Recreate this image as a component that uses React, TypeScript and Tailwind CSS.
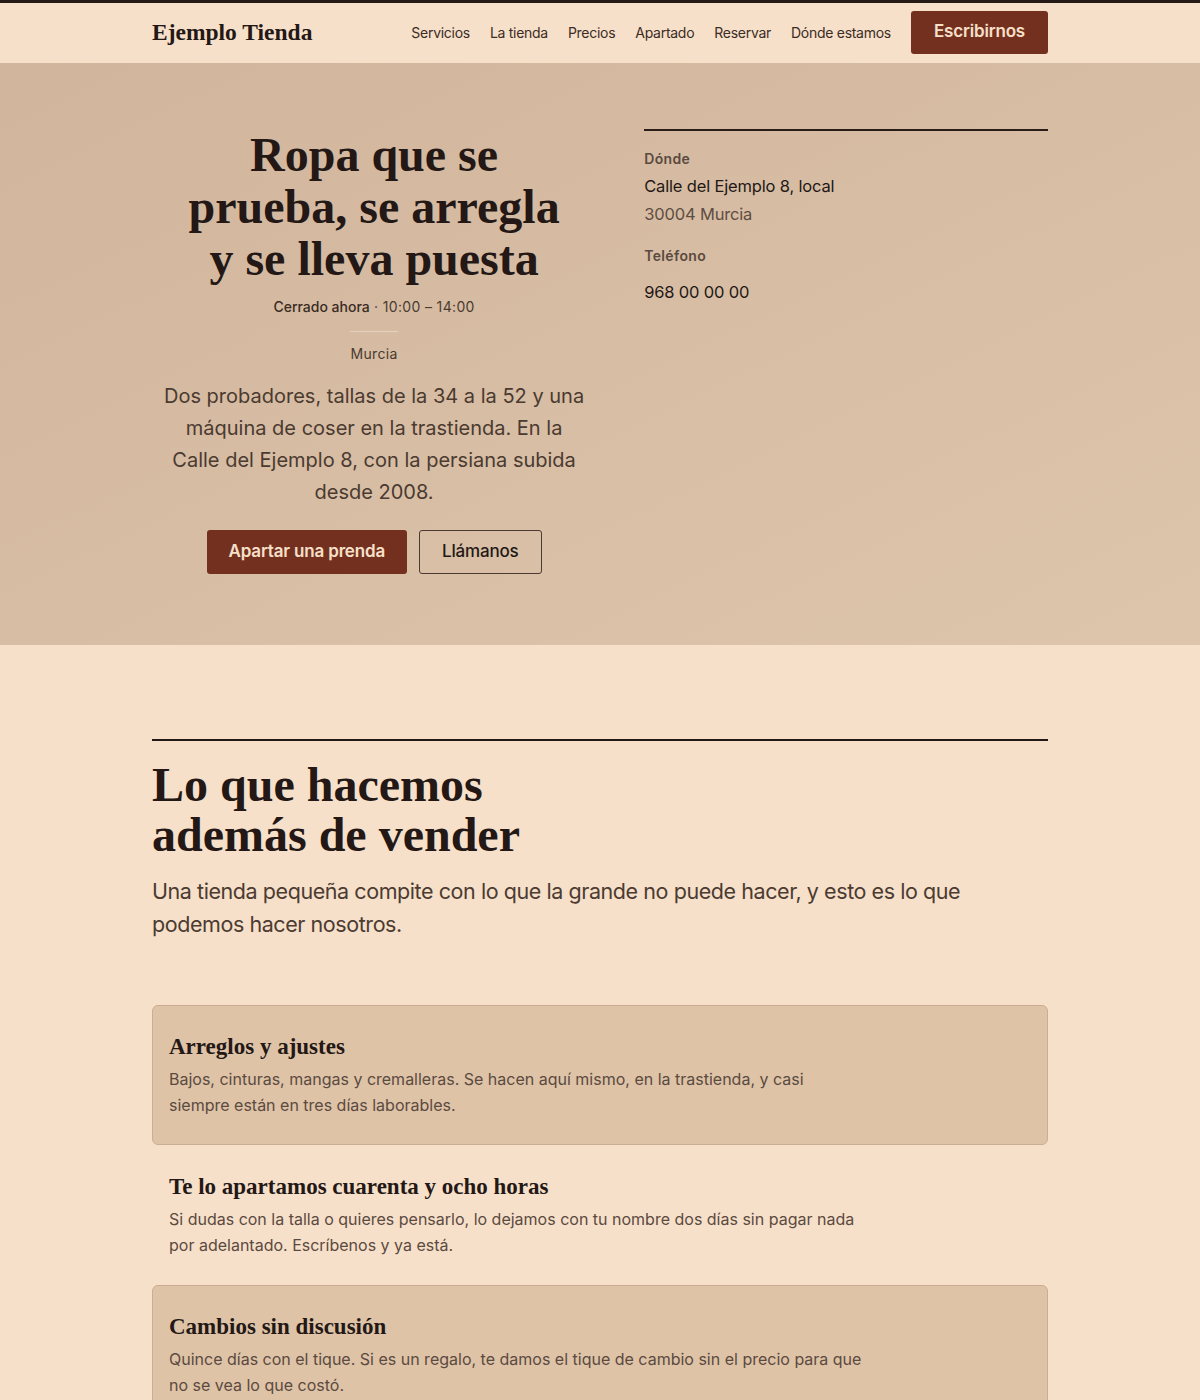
const serif = "font-['Liberation_Serif',serif]";

const NAV = ["Servicios", "La tienda", "Precios", "Apartado", "Reservar", "Dónde estamos"];

const SERVICES = [
  {
    title: "Arreglos y ajustes",
    text: "Bajos, cinturas, mangas y cremalleras. Se hacen aquí mismo, en la trastienda, y casi siempre están en tres días laborables.",
    filled: true,
  },
  {
    title: "Te lo apartamos cuarenta y ocho horas",
    text: "Si dudas con la talla o quieres pensarlo, lo dejamos con tu nombre dos días sin pagar nada por adelantado. Escríbenos y ya está.",
    filled: false,
  },
  {
    title: "Cambios sin discusión",
    text: "Quince días con el tique. Si es un regalo, te damos el tique de cambio sin el precio para que no se vea lo que costó.",
    filled: true,
  },
];

function Header() {
  return (
    <header className="border-t-[3px] border-[#231a16] bg-[#f7e0ca]">
      <div className="mx-auto flex h-[60px] max-w-4xl items-center justify-between">
        <a className={`${serif} text-[23.5px] font-bold text-[#231815]`}>Ejemplo Tienda</a>
        <nav className="flex items-center gap-5">
          {NAV.map((item) => (
            <a key={item} className="text-sm tracking-[-0.02em] text-[#3b2c24]">
              {item}
            </a>
          ))}
          <a className="-mt-0.5 flex h-[43px] items-center rounded-[3px] bg-[#74301f] px-[23px] text-[17px] font-semibold tracking-[-0.01em] text-[#f7e0ca]">
            Escribirnos
          </a>
        </nav>
      </div>
    </header>
  );
}

function Hero() {
  return (
    <section className="bg-linear-to-br from-[#d1b59c] to-[#ddc5ab] pt-[66px] pb-[71px]">
      <div className="mx-auto grid max-w-4xl grid-cols-[1.1fr_1fr] gap-12">
        <div className="flex flex-col items-center text-center">
          <h1 className={`${serif} text-[48px] leading-[52px] font-bold text-[#231815]`}>
            Ropa que se
            <br />
            prueba, se arregla
            <br />y se lleva puesta
          </h1>
          <p className="mt-3 text-sm leading-5 text-[#4a3a30]">
            <span className="font-medium text-[#3a2b23]">Cerrado ahora</span>
            <span className="tracking-wide"> · 10:00 – 14:00</span>
          </p>
          <div className="mt-3.5 h-px w-12 bg-[#e4d0bc]" />
          <p className="mt-3 text-sm leading-5 tracking-wide text-[#4a3a30]">Murcia</p>
          <p className="mt-4 text-[20px] leading-8 text-[#4a3a30]">
            Dos probadores, tallas de la 34 a la 52 y una
            <br />
            máquina de coser en la trastienda. En la
            <br />
            Calle del Ejemplo 8, con la persiana subida
            <br />
            desde 2008.
          </p>
          <div className="mt-[22px] flex gap-3">
            <a className="flex h-11 items-center rounded-[3px] bg-[#74301f] px-[22px] text-[17px] font-semibold tracking-[-0.01em] text-[#f7e0ca]">
              Apartar una prenda
            </a>
            <a className="flex h-11 items-center rounded-[3px] border border-[#4a3a30] px-[22px] text-[17px] font-medium tracking-[-0.01em] text-[#231815]">
              Llámanos
            </a>
          </div>
        </div>
        <div className="self-start border-t-2 border-[#2a1c16] pt-[18px]">
          <p className="text-sm leading-5 font-semibold tracking-wide text-[#5a4a40]">Dónde</p>
          <p className="mt-[3px] text-[16.5px] leading-7 tracking-[-0.01em] text-[#231815]">
            Calle del Ejemplo 8, local
          </p>
          <p className="text-[16.5px] leading-7 tracking-[-0.01em] text-[#5e4d42]">30004 Murcia</p>
          <p className="mt-[18px] text-sm leading-5 font-semibold tracking-wide text-[#5a4a40]">Teléfono</p>
          <p className="mt-3 text-[16.5px] leading-7 tracking-[-0.01em] text-[#231815]">968 00 00 00</p>
        </div>
      </div>
    </section>
  );
}

function Services() {
  return (
    <section className="pt-[94px]">
      <div className="mx-auto max-w-4xl border-t-2 border-[#231a16]">
        <h2 className={`${serif} mt-[19px] text-[48px] leading-[50px] font-bold text-[#231815]`}>
          Lo que hacemos
          <br />
          además de vender
        </h2>
        <p className="mt-[15px] max-w-[840px] text-[21.5px] leading-[33px] tracking-[-0.02em] text-[#4b3b31]">
          Una tienda pequeña compite con lo que la grande no puede hacer, y esto es lo que podemos hacer nosotros.
        </p>
        <div className="mt-16 flex flex-col">
          {SERVICES.map((s) => (
            <div
              key={s.title}
              className={
                s.filled
                  ? "rounded-md border border-[#c9ae94] bg-[#dec3a7] px-4 pt-[26px] pb-[26px]"
                  : "rounded-md border border-transparent px-4 pt-[26px] pb-[26px]"
              }
            >
              <h3 className={`${serif} text-[23px] leading-[30px] font-bold text-[#231815]`}>{s.title}</h3>
              <p className="mt-1 max-w-[696px] text-base leading-[26px] text-[#5b4a3f]">{s.text}</p>
            </div>
          ))}
        </div>
      </div>
    </section>
  );
}

export default function App() {
  return (
    <main className="min-h-screen bg-[#f7e0ca] font-['Inter',sans-serif] pb-24">
      <Header />
      <Hero />
      <Services />
    </main>
  );
}
